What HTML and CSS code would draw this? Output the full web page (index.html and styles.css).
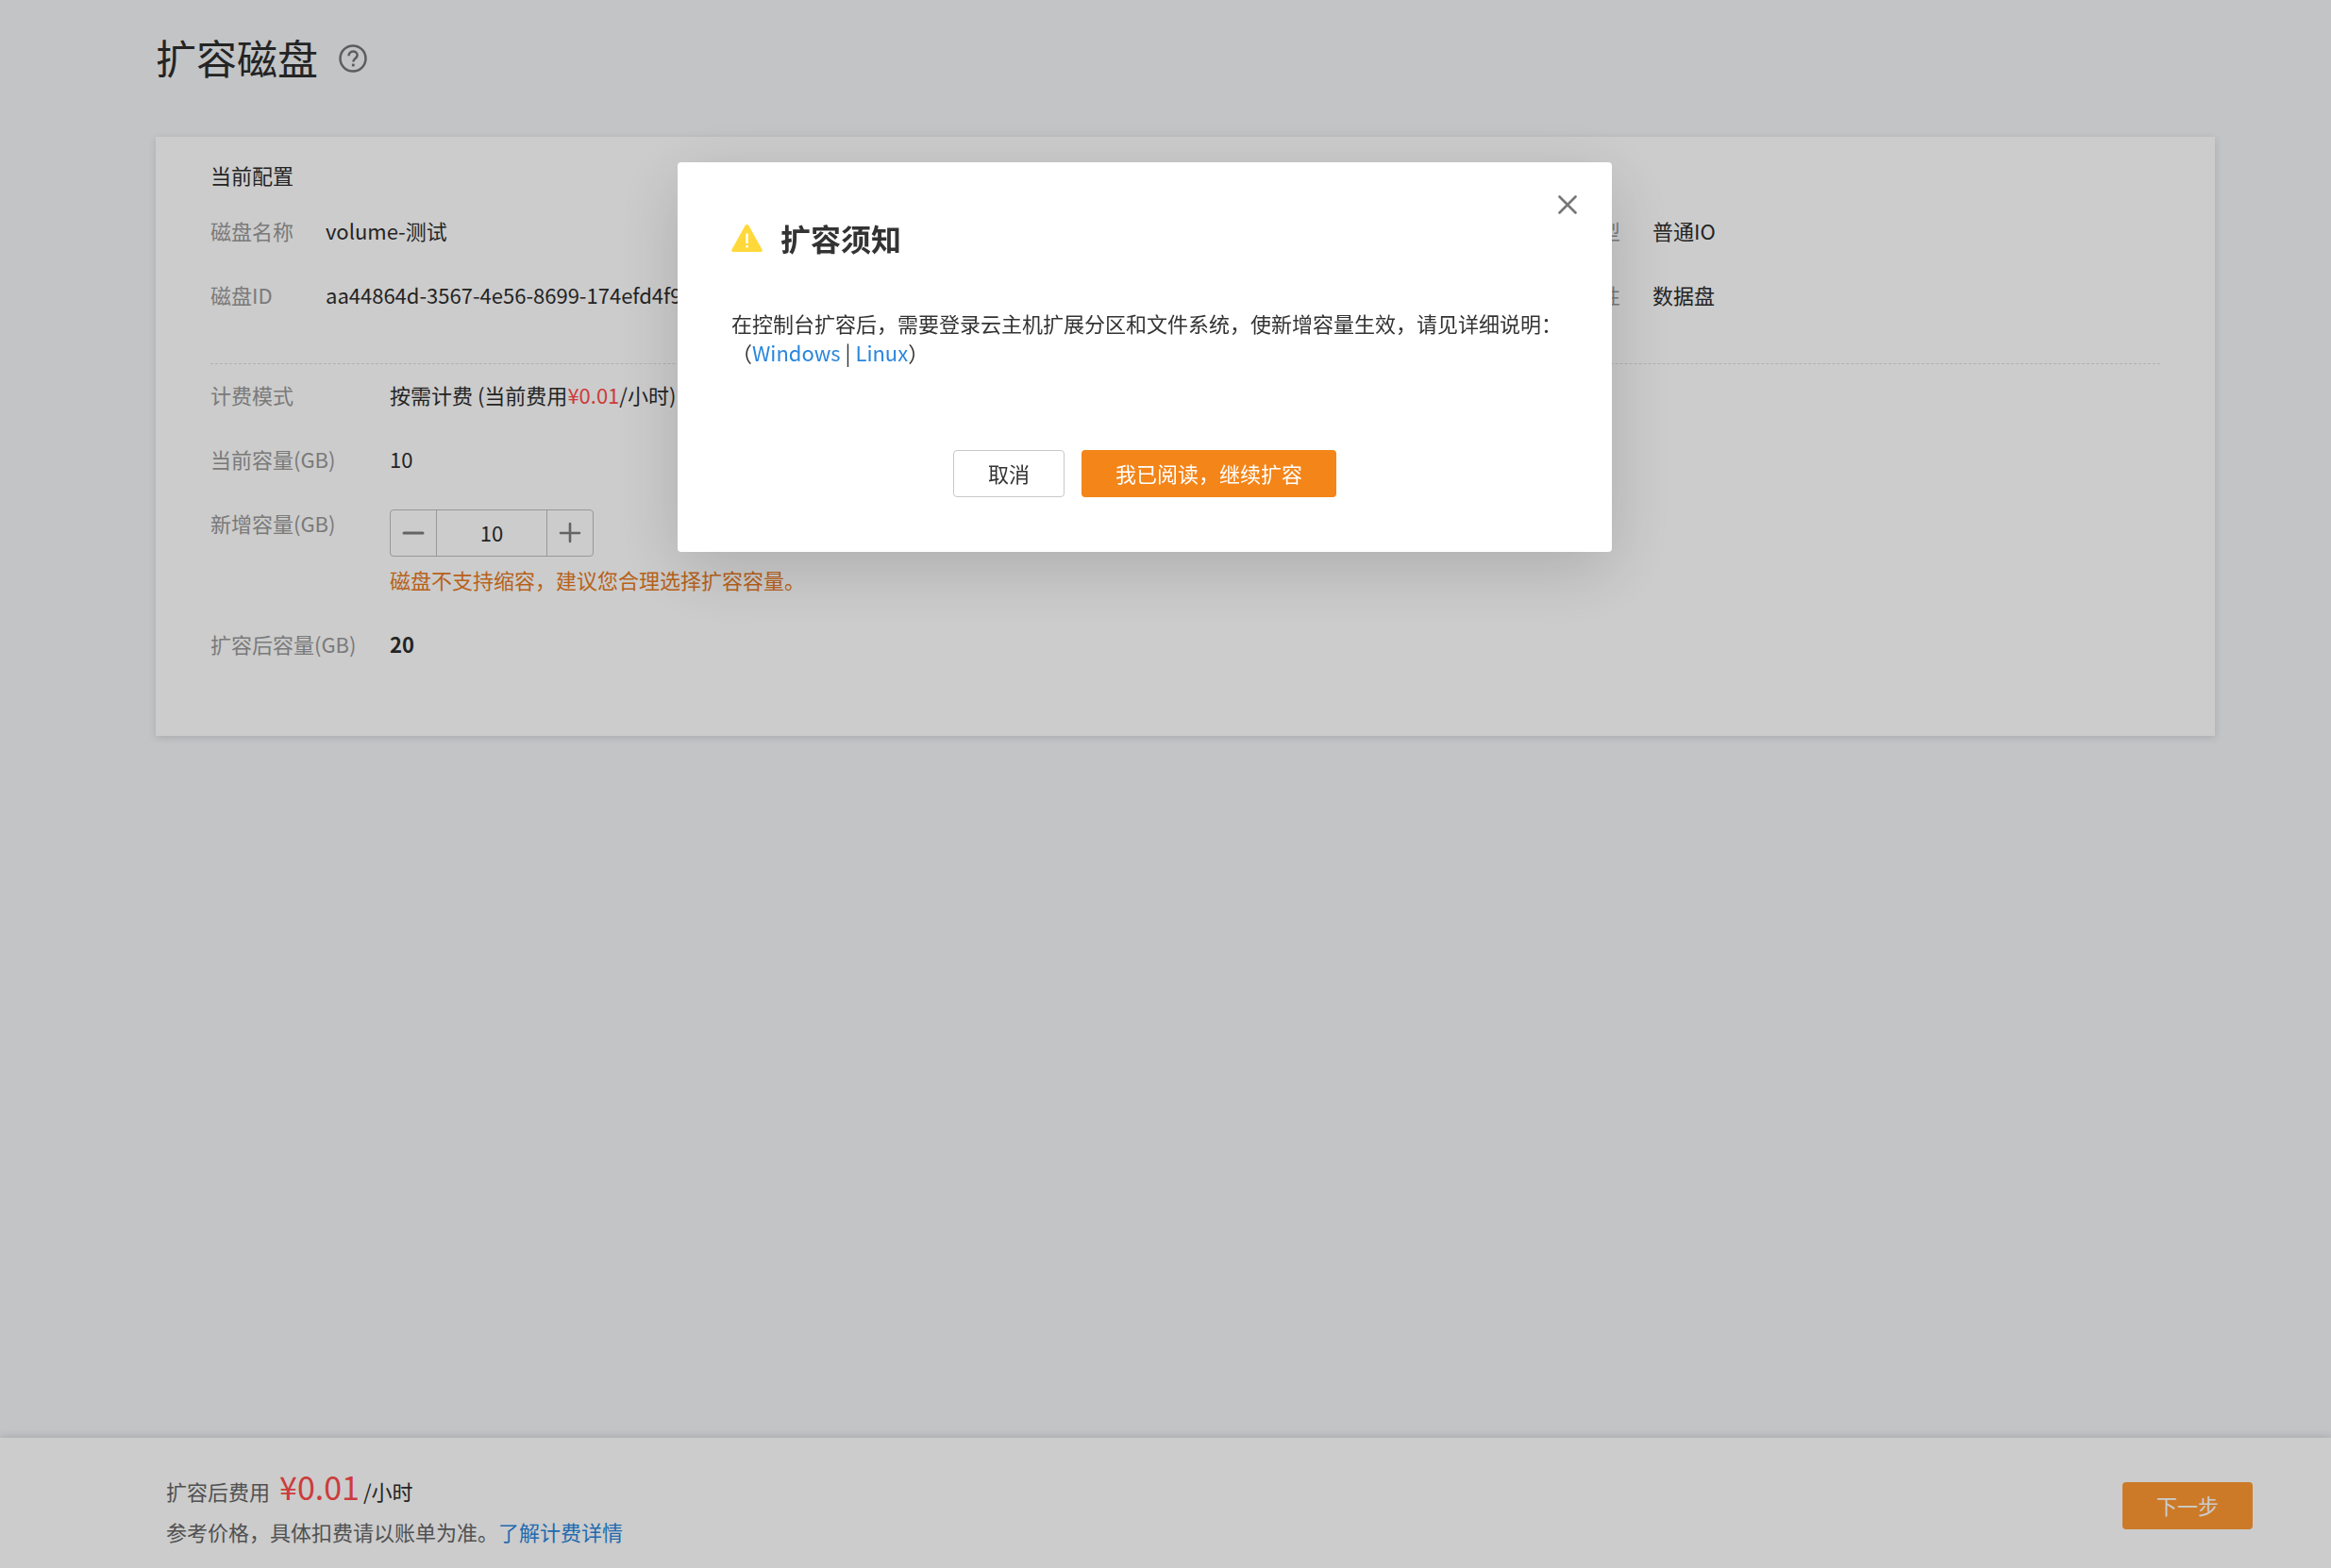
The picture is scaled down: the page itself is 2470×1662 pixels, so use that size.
FILE: index.html
```html
<!DOCTYPE html>
<html lang="zh-CN">
<head>
<meta charset="utf-8">
<meta name="viewport" content="width=device-width, initial-scale=1">
<title>扩容磁盘</title>
<link rel="stylesheet" href="styles.css">
</head>
<body>
<main class="page">
  <header class="page-head">
    <h1 class="page-title">扩容磁盘</h1>
    <button class="icon-button help" type="button" aria-label="帮助">
      <svg viewBox="0 0 30 30" width="30" height="30" fill="none" stroke="currentColor" stroke-width="2.500">
        <circle cx="15" cy="15" r="13.500"/>
        <path d="M10.500 12.200c0-2.800 2-4.600 4.600-4.600s4.500 1.600 4.500 4c0 3.300-4.300 3.400-4.300 6.900"/>
        <path d="M15.300 20.600v2.800" stroke-width="2.800"/>
      </svg>
    </button>
  </header>

  <section class="card">
    <h2 class="card-title">当前配置</h2>
    <dl class="summary">
      <div class="summary-item"><dt>磁盘名称</dt><dd>volume-测试</dd></div>
      <div class="summary-item summary-side"><dt>磁盘类型</dt><dd>普通IO</dd></div>
      <div class="summary-item"><dt>磁盘ID</dt><dd>aa44864d-3567-4e56-8699-174efd4f9</dd></div>
      <div class="summary-item summary-side"><dt>磁盘属性</dt><dd>数据盘</dd></div>
    </dl>
    <form class="form">
      <div class="field">
        <span class="label">计费模式</span>
        <div>按需计费 (当前费用<span class="price">¥0.01</span>/小时)</div>
      </div>
      <div class="field">
        <span class="label">当前容量(GB)</span>
        <div>10</div>
      </div>
      <div class="field">
        <label class="label" for="added">新增容量(GB)</label>
        <div class="control">
          <div class="stepper">
            <button class="step" type="button" aria-label="减少">
              <svg viewBox="0 0 24 24" width="24" height="24" stroke="currentColor" stroke-width="3" stroke-linecap="round"><path d="M2 12h20"/></svg>
            </button>
            <input class="step-value" id="added" type="text" inputmode="numeric" value="10">
            <button class="step" type="button" aria-label="增加">
              <svg viewBox="0 0 24 24" width="24" height="24" stroke="currentColor" stroke-width="2.600" stroke-linecap="round"><path d="M2 12h20M12 2v19"/></svg>
            </button>
          </div>
          <p class="hint">磁盘不支持缩容，建议您合理选择扩容容量。</p>
        </div>
      </div>
      <div class="field">
        <span class="label">扩容后容量(GB)</span>
        <strong>20</strong>
      </div>
    </form>
  </section>
</main>

<footer class="footer">
  <div class="footer-text">
    <p class="cost"><span>扩容后费用</span><span class="cost-value">¥0.01</span><span class="cost-unit">/小时</span></p>
    <p class="note"><span>参考价格，具体扣费请以账单为准。</span><a href="#">了解计费详情</a></p>
  </div>
  <button class="button button-next" type="button">下一步</button>
</footer>

<div class="overlay">
  <div class="modal" role="dialog" aria-modal="true" aria-labelledby="modal-title">
    <button class="icon-button close" type="button" aria-label="关闭">
      <svg viewBox="0 0 20 20" width="20" height="20" stroke="currentColor" stroke-width="2.600" stroke-linecap="round"><path d="M1.500 1.500l17 17M18.500 1.500l-17 17"/></svg>
    </button>
    <div class="modal-head">
      <svg viewBox="0 0 33 29" width="33" height="29">
        <path d="M14.600 1.100a2.200 2.200 0 0 1 3.800 0l14.200 25.500a1.600 1.600 0 0 1-1.400 2.400H1.800a1.600 1.600 0 0 1-1.400-2.400z" fill="#ffd93b"/>
        <path d="M16.500 9.500v10.500M16.500 22v2.500" stroke="#fff" stroke-width="2.400"/>
      </svg>
      <h2 class="modal-title" id="modal-title">扩容须知</h2>
    </div>
    <p class="modal-text">在控制台扩容后，需要登录云主机扩展分区和文件系统，使新增容量生效，请见详细说明：<br>（<a href="#">Windows</a> | <a href="#">Linux</a>）</p>
    <div class="modal-actions">
      <button class="button button-plain" type="button">取消</button>
      <button class="button button-primary" type="button">我已阅读，继续扩容</button>
    </div>
  </div>
</div>
</body>
</html>
```
FILE: styles.css
```css
* {
  box-sizing: border-box;
}

body {
  display: flex;
  flex-direction: column;
  min-height: 100vh;
  margin: 0;
  background: #f3f5f8;
  color: #2d2d2d;
  font: 22px/32px "Noto Sans CJK SC", "Noto Sans", sans-serif;
}

h1,
h2,
p,
dl,
dd {
  margin: 0;
}

button,
input {
  font: inherit;
  color: inherit;
}

a {
  color: #2a86dc;
  text-decoration: none;
}

.icon-button {
  display: flex;
  padding: 0;
  border: 0;
  background: none;
}

.page {
  flex: 1;
  padding: 32px 123px 32px 165px;
}

.page-head {
  display: flex;
  align-items: center;
  gap: 22px;
  margin-bottom: 53px;
}

.page-title {
  padding-bottom: 4px;
  font-size: 43px;
  font-weight: 400;
  line-height: 56px;
}

.help {
  color: #757575;
}

.card {
  padding: 24px 58px 82px;
  background: #fff;
  box-shadow: 0 2px 8px rgba(0, 0, 0, 0.12);
}

.card-title {
  margin-bottom: 27px;
  font-size: 22px;
  font-weight: 400;
}

.summary {
  display: grid;
  grid-template-columns: repeat(3, 1fr);
  gap: 36px 43px;
  padding-bottom: 57px;
  border-bottom: 1px dashed #dedede;
}

.summary-item {
  display: flex;
}

.summary-side {
  grid-column: 3;
}

.summary dt {
  flex: none;
  width: 122px;
  color: #999;
}

.form {
  display: grid;
  gap: 36px;
  padding-top: 16px;
}

.field {
  display: flex;
}

.label {
  flex: none;
  width: 190px;
  color: #999;
}

.price {
  color: #ff4c4c;
}

.control {
  display: grid;
  gap: 8px;
  padding-top: 2px;
}

.stepper {
  display: flex;
  width: 216px;
  height: 50px;
  border: 1px solid #bfbfbf;
  border-radius: 4px;
}

.step {
  display: flex;
  flex: none;
  align-items: center;
  justify-content: center;
  width: 48px;
  padding: 0;
  border: 0;
  background: none;
  color: #7d7d7d;
}

.step-value {
  flex: 1;
  min-width: 0;
  padding: 0 0 2px;
  border: 1px solid #bfbfbf;
  border-width: 0 1px;
  background: none;
  text-align: center;
}

.hint {
  color: #e67a23;
}

.footer {
  display: flex;
  align-items: center;
  justify-content: space-between;
  min-height: 138px;
  padding: 24px 83px 18px 176px;
  background: #fff;
  box-shadow: 0 -2px 8px rgba(0, 0, 0, 0.12);
  color: #666;
}

.footer-text {
  display: grid;
  gap: 11px;
  padding-top: 3px;
}

.cost {
  display: flex;
  align-items: baseline;
}

.cost-value {
  margin: 0 4px 0 10px;
  color: #ff4c4c;
  font-size: 34px;
  line-height: 40px;
}

.cost-unit {
  color: #2d2d2d;
}

.note {
  display: flex;
}

.button {
  height: 50px;
  padding: 0 36px 2px;
  border: 0;
  border-radius: 4px;
  color: #fff;
}

.button-next {
  background: #ff9933;
}

.button-primary {
  background: #f38519;
}

.button-plain {
  border: 1px solid #c8c8c8;
  background: #fff;
  color: #333;
}

.overlay {
  position: fixed;
  inset: 0;
  display: flex;
  align-items: flex-start;
  justify-content: center;
  padding: 172px 44px 0 0;
  background: rgba(0, 0, 0, 0.2);
}

.modal {
  position: relative;
  width: 990px;
  padding: 60px 52px 58px 57px;
  border-radius: 4px;
  background: #fff;
  box-shadow: 0 18px 72px rgba(0, 0, 0, 0.16);
  color: #333;
}

.close {
  position: absolute;
  top: 35px;
  right: 37px;
  color: #777;
}

.modal-head {
  display: flex;
  align-items: center;
  gap: 19px;
}

.modal-title {
  font-size: 32px;
  font-weight: 700;
  line-height: 40px;
}

.modal-text {
  margin: 55px 0 88px;
  line-height: 31px;
}

.modal-actions {
  display: flex;
  justify-content: center;
  gap: 18px;
  padding-right: 5px;
}
```
